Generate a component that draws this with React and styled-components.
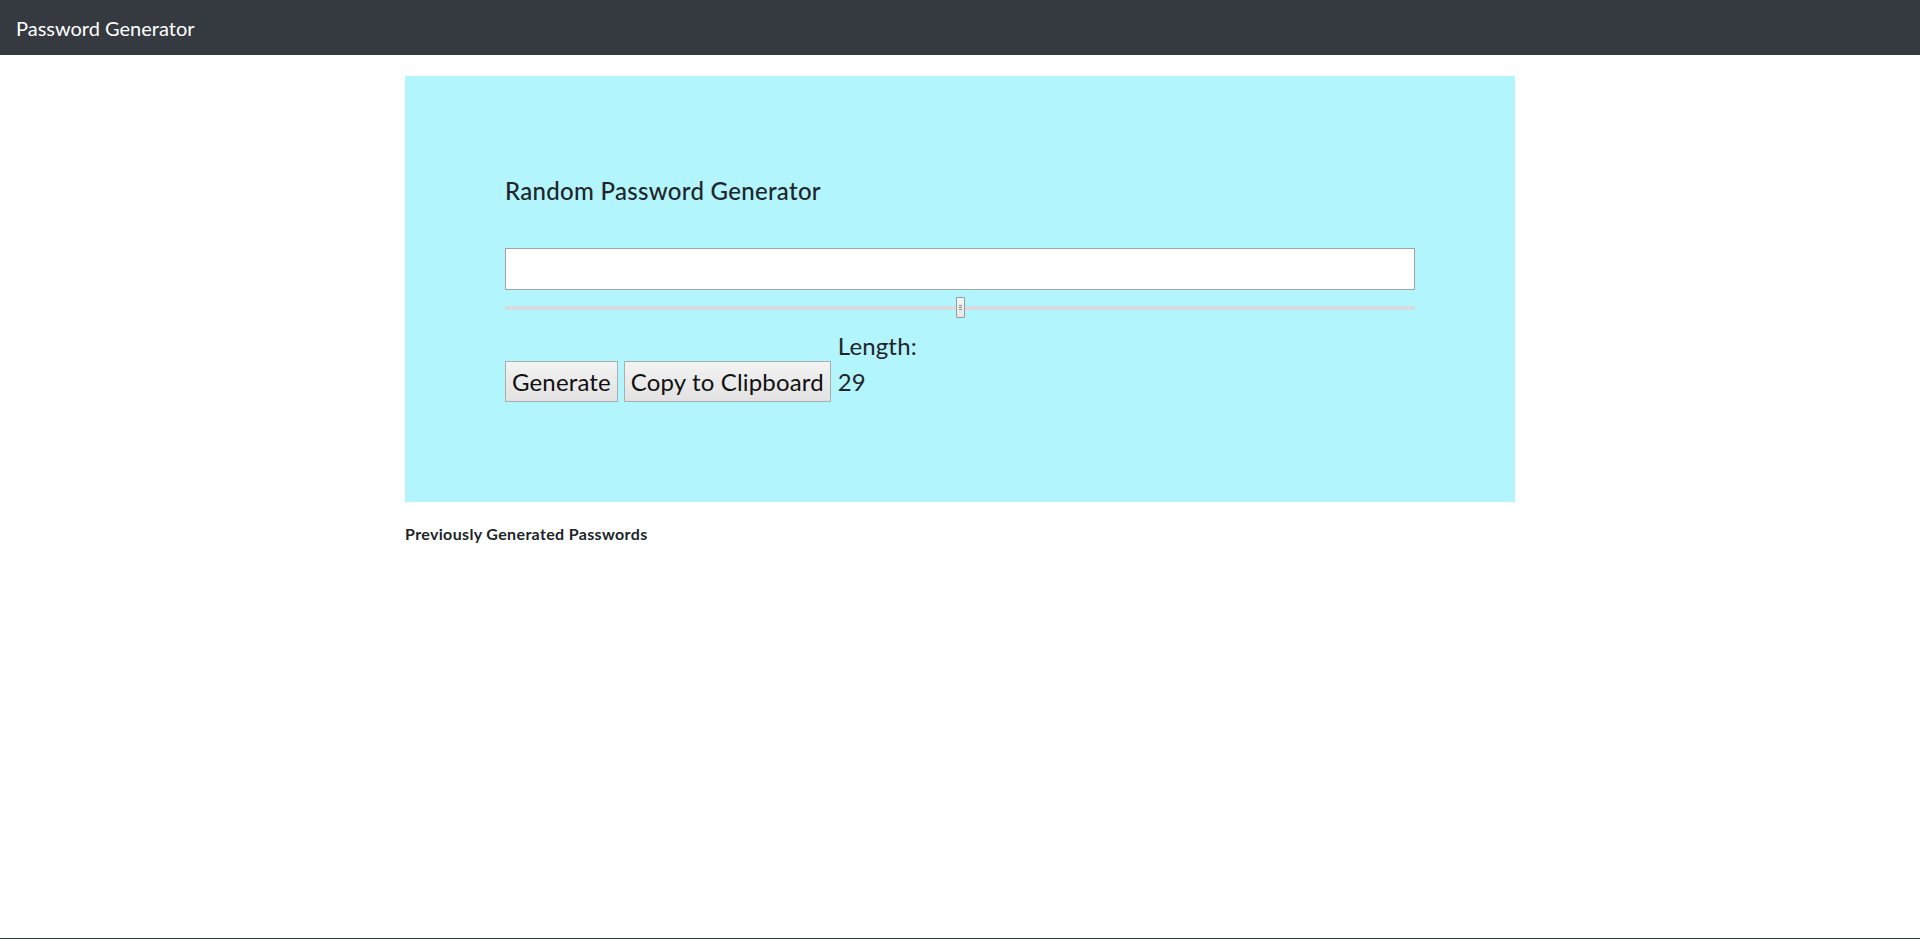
import React, { useState } from "react"
import styled, { createGlobalStyle } from "styled-components"

const GlobalStyle = createGlobalStyle`
    html, body {
        margin: 0;
        padding: 0;
    }
    body {
        font-family: "Segoe UI", Lato, "Open Sans", sans-serif;
        color: #212529;
        background-color: #ffffff;
        line-height: 1.5;
    }
    * {
        box-sizing: border-box;
    }
`

const Page = styled.div`
    min-height: 100vh;
    display: flex;
    flex-direction: column;
`

const NavBar = styled.nav`
    background-color: #343a40;
    height: 55px;
    padding: 0 16px;
    display: flex;
    align-items: center;
`

const Brand = styled.span`
    color: #ffffff;
    font-size: 20px;
    line-height: 30px;
`

const Container = styled.main`
    flex: 1;
    width: 1110px;
    margin: 21px auto 0;
`

const Card = styled.section`
    background-color: #b3f5fc;
    padding: 100px 100px 100px;
`

const Title = styled.h4`
    margin: 0 0 43px;
    font-size: 24px;
    font-weight: 500;
    line-height: 29px;
    letter-spacing: 0.3px;
`

const PasswordInput = styled.input`
    display: block;
    width: 100%;
    height: 42px;
    border: 1px solid #a0a4a8;
    background: #ffffff;
    font-size: 20px;
    padding: 0 8px;
    margin: 0;
`

const Slider = styled.input`
    -webkit-appearance: none;
    appearance: none;
    display: block;
    width: 100%;
    height: 21px;
    margin: 7px 0 0;
    padding: 0;
    background: transparent;

    &::-webkit-slider-runnable-track {
        height: 4px;
        background: #d8dcde;
    }

    &::-webkit-slider-thumb {
        -webkit-appearance: none;
        width: 9px;
        height: 21px;
        margin-top: -8.5px;
        border: 1px solid #9a9a9a;
        border-radius: 1px;
        background:
            linear-gradient(#8a8a8a, #8a8a8a) center 7px / 3px 1px no-repeat,
            linear-gradient(#8a8a8a, #8a8a8a) center 9px / 3px 1px no-repeat,
            linear-gradient(#8a8a8a, #8a8a8a) center 11px / 3px 1px no-repeat,
            linear-gradient(#f4f4f4, #e6e6e6);
    }
`

const Controls = styled.div`
    display: flex;
    align-items: last baseline;
    gap: 6px;
    margin-top: 10px;
    font-size: 24px;
    line-height: 36px;
    letter-spacing: 0.15px;
`

const Button = styled.button`
    font-family: inherit;
    font-size: 24px;
    line-height: 33px;
    letter-spacing: inherit;
    color: #111;
    padding: 3px 6px;
    border: 1px solid #adadad;
    border-radius: 0;
    background: linear-gradient(#f3f3f3, #e2e2e2);
    cursor: pointer;
`

const LengthLabel = styled.div`
    margin-left: 1px;
`

const History = styled.h6`
    margin: 20px 0 0;
    font-size: 16px;
    font-weight: 700;
    line-height: 24px;
    letter-spacing: 0.35px;
`

const Footer = styled.footer`
    height: 1px;
    background-color: #343a40;
`

export default function App() {
    const [length, setLength] = useState(29)

    return (
        <>
            <GlobalStyle />
            <Page>
                <NavBar>
                    <Brand>Password Generator</Brand>
                </NavBar>
                <Container>
                    <Card>
                        <Title>Random Password Generator</Title>
                        <PasswordInput type="text" readOnly value="" />
                        <Slider
                            type="range"
                            min="8"
                            max="50"
                            value={length}
                            onChange={e => setLength(Number(e.target.value))}
                        />
                        <Controls>
                            <Button>Generate</Button>
                            <Button>Copy to Clipboard</Button>
                            <LengthLabel>
                                Length:
                                <br />
                                {length}
                            </LengthLabel>
                        </Controls>
                    </Card>
                    <History>Previously Generated Passwords</History>
                </Container>
                <Footer />
            </Page>
        </>
    )
}
